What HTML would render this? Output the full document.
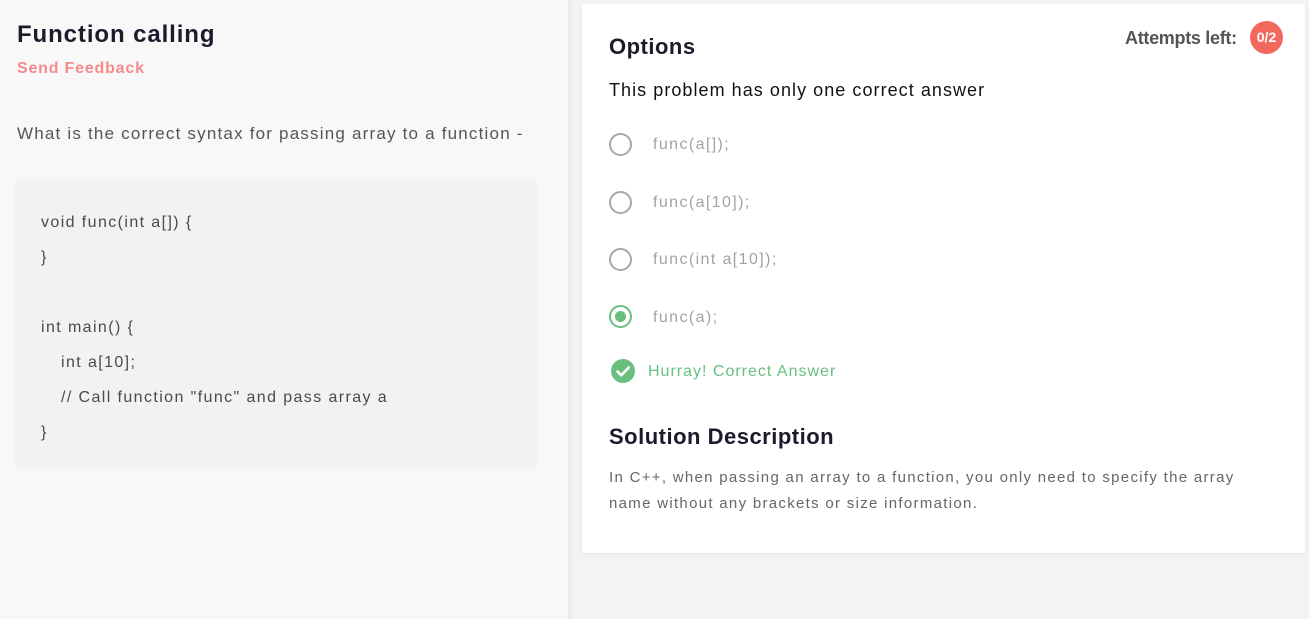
<!DOCTYPE html>
<html><head><style>
body{margin:0;width:1309px;height:619px;background:#f3f3f3;font-family:"Liberation Sans",sans-serif;position:relative;overflow:hidden}
.left{position:absolute;left:0;top:0;width:568px;height:619px;background:#f8f8f8;box-shadow:2px 0 6px rgba(0,0,0,.06)}
.card{position:absolute;left:582px;top:4px;width:723px;height:549px;background:#fff;box-shadow:0 2px 6px rgba(0,0,0,.05)}
.t{position:absolute;white-space:nowrap}
.radio{position:absolute;left:609px;width:23px;height:23px;border:2px solid #a8a8a8;border-radius:50%;box-sizing:border-box}
.opt{position:absolute;left:653px;font-size:16px;color:#a3a3a3;letter-spacing:1.4px}
.code{position:absolute;left:14px;top:179px;width:524px;height:290px;background:#f2f2f2;border-radius:8px}
.cl{position:absolute;left:41px;font-size:16px;color:#4a4a4a;letter-spacing:1.4px}
</style></head><body>
<div class="left">
<div class="t" style="left:17px;top:21px;font-size:24px;font-weight:bold;color:#1b1b2b;letter-spacing:0.9px">Function calling</div>
<div class="t" style="left:17px;top:60px;font-size:16px;font-weight:bold;color:#f58a8a;letter-spacing:0.8px">Send Feedback</div>
<div class="t" style="left:17px;top:124px;font-size:17px;color:#555;letter-spacing:1.2px">What is the correct syntax for passing array to a function -</div>
<div class="code"></div>
<div class="t cl" style="top:214px">void func(int a[]) {</div>
<div class="t cl" style="top:249px">}</div>
<div class="t cl" style="top:319px">int main() {</div>
<div class="t cl" style="top:354px;left:61px">int a[10];</div>
<div class="t cl" style="top:389px;left:61px">// Call function "func" and pass array a</div>
<div class="t cl" style="top:424px">}</div>
</div>
<div class="card"></div>
<div class="t" style="left:609px;top:34px;font-size:22px;font-weight:bold;color:#1b1b2b;letter-spacing:0.5px">Options</div>
<div class="t" style="left:1125px;top:28px;font-size:18px;font-weight:bold;color:#555;letter-spacing:-0.3px">Attempts left:</div>
<div class="t" style="left:1250px;top:21px;width:33px;height:33px;border-radius:50%;background:#f2685c;color:#fff;font-size:14px;font-weight:bold;line-height:33px;text-align:center">0/2</div>
<div class="t" style="left:609px;top:80px;font-size:18px;color:#111;letter-spacing:1.05px">This problem has only one correct answer</div>
<div class="radio" style="top:133px"></div><div class="t opt" style="top:136px">func(a[]);</div>
<div class="radio" style="top:191px"></div><div class="t opt" style="top:194px">func(a[10]);</div>
<div class="radio" style="top:248px"></div><div class="t opt" style="top:251px">func(int a[10]);</div>
<div class="radio" style="top:305px;border-color:#6abf7f"><div style="position:absolute;left:4px;top:4px;width:11px;height:11px;border-radius:50%;background:#6abf7f"></div></div>
<div class="t opt" style="top:309px">func(a);</div>
<svg class="t" style="left:611px;top:359px" width="24" height="24" viewBox="0 0 24 24"><circle cx="12" cy="12" r="12" fill="#6abf7f"/><path d="M6.5 12.5l3.8 3.8 7.5-7.8" stroke="#fff" stroke-width="2.6" fill="none" stroke-linecap="round" stroke-linejoin="round"/></svg>
<div class="t" style="left:648px;top:363px;font-size:16px;color:#6abf7f;letter-spacing:1px">Hurray! Correct Answer</div>
<div class="t" style="left:609px;top:424px;font-size:22px;font-weight:bold;color:#1b1b2b;letter-spacing:0.5px">Solution Description</div>
<div class="t" style="left:609px;top:465px;font-size:15px;color:#666;line-height:26px;letter-spacing:1.3px">In C++, when passing an array to a function, you only need to specify the array<br>name without any brackets or size information.</div>
</body></html>
